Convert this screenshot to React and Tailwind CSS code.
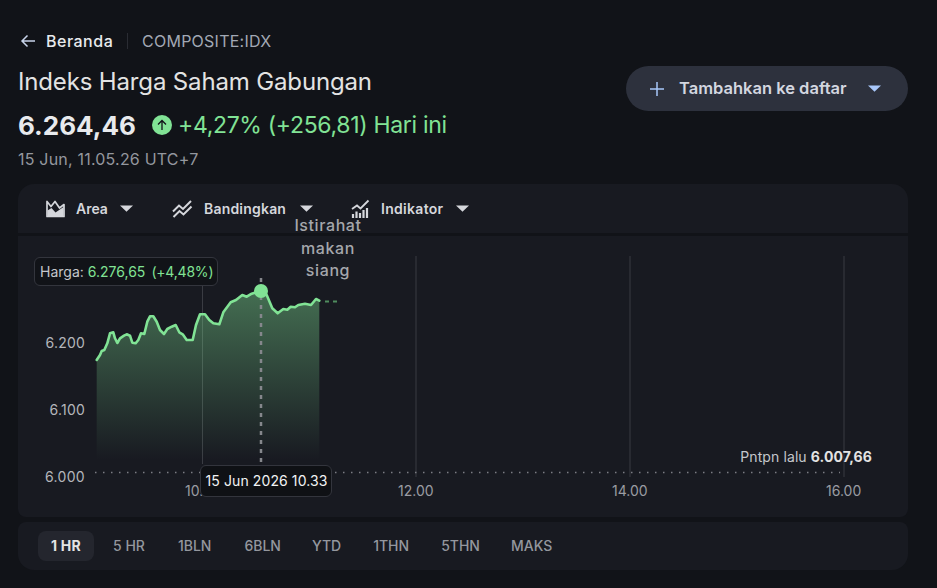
const pts = [[96.7,360],[100,355],[101.7,351],[104.3,350],[107.3,343.3],[110,333.3],[113.3,332.3],[115,338.3],[117.3,343],[120,338.3],[124,335.7],[126.7,334.3],[130,335.7],[132.3,342.7],[135.7,343.3],[138.3,340],[141,333.3],[144.3,334],[147.3,321.7],[150,316.3],[153.3,316.3],[156.7,321.7],[160,330],[164,334],[167.3,329],[171.7,326.7],[175.7,325],[179.3,332.3],[182.7,334.3],[186.7,340],[192.7,340],[196,325],[200,314.3],[205,314.3],[209.3,320],[213.3,323.3],[219.3,324.3],[223.3,312.3],[230.7,302.3],[236,300],[242.3,295],[246.7,296.7],[251.7,293.7],[260,291],[266.7,295],[272.3,308.3],[277.7,313.3],[283.3,309],[287.3,309.7],[290.7,306.7],[295,307.3],[298.3,305],[305,303.7],[311,305],[316,299],[319.3,300.7]];
const OX = 18, OY = 236;
const line = pts.map(([x, y]) => `${(x - OX).toFixed(1)},${(y - OY).toFixed(1)}`).join(" ");
const area = `${line} ${319.3 - OX},${460 - OY} ${96.7 - OX},${460 - OY}`;

function Caret({ className }) {
  return (
    <svg width="13" height="7" viewBox="0 0 13 7" className={className}>
      <path d="M0 0.500h13L6.500 6.800z" fill="currentColor" />
    </svg>
  );
}
function AreaIcon() {
  return (
    <svg width="20" height="20" viewBox="0 0 20 20" fill="none">
      <path d="M2 2.500v15h17V5.500l-4.500 3.500L10 2.500 6 7.500z" stroke="#d5d7dc" strokeWidth="1.700" strokeLinejoin="round" />
      <path d="M2.500 17v-5.500l4-2.500 4 4.500 8-5.500v9z" fill="#d5d7dc" />
    </svg>
  );
}
function CompareIcon() {
  return (
    <svg width="21" height="20" viewBox="0 0 21 20" fill="none" stroke="#d5d7dc" strokeWidth="2">
      <path d="M1 12.500l6-6 4 3.500 8-8" />
      <path d="M1.500 18l6-6 4 3.500 8-8" />
    </svg>
  );
}
function IndicatorIcon() {
  return (
    <svg width="19" height="20" viewBox="0 0 19 20" fill="none">
      <path d="M1 10l5-3.500 3.500 3L17.500 1.500" stroke="#d5d7dc" strokeWidth="1.800" />
      <path d="M2 19v-4M5.500 19v-6.500M9 19v-5M12.500 19v-8M16 19V9" stroke="#d5d7dc" strokeWidth="2.200" />
    </svg>
  );
}
const toolBtn = "flex items-center text-sm font-semibold text-[#d5d7dc]";
const ranges = [["5 HR", "ml-[19px]"], ["1BLN", "ml-[33px]"], ["6BLN", "ml-[33px]"], ["YTD", "ml-[31px]"], ["1THN", "ml-[32px]"], ["5THN", "ml-[32px]"], ["MAKS", "ml-[31px]"]];

export default function App() {
  return (
    <div className="w-[937px] h-[588px] overflow-hidden bg-[#111318] pl-[18px] pr-[29px] pt-[31px] font-['Inter',sans-serif] text-[#e3e3e3]">
      <div className="flex items-center h-5">
        <svg width="16" height="16" viewBox="0 0 16 16" fill="none" stroke="#c8d4ea" strokeWidth="1.500" className="ml-[2px]">
          <path d="M15 8H2M7.500 2.500L2 8l5.500 5.500" />
        </svg>
        <span className="ml-[10px] text-base font-medium tracking-[0.5px] text-[#e8eaed] w-[68px] whitespace-nowrap">Beranda</span>
        <span className="ml-[13px] w-px h-4 bg-[#2a2c33]" />
        <span className="ml-[14px] text-base tracking-[0.25px] text-[#a2a8b4]">COMPOSITE:IDX</span>
      </div>
      <div className="flex justify-between">
        <div>
          <div className="mt-[15px] text-2xl leading-8 tracking-[-0.15px] text-[#e3e3e3]">Indeks Harga Saham Gabungan</div>
          <div className="flex items-center mt-[9px] h-9">
            <span className="text-[26px] font-bold text-[#e8eaed] w-[134px]">6.264,46</span>
            <span className="flex items-center justify-center w-[20px] h-[20px] rounded-full bg-[#81e395]">
              <svg width="12" height="12" viewBox="0 0 12 12" fill="none" stroke="#111318" strokeWidth="1.300"><path d="M6 11V1.500M2 5.500l4-4 4 4" /></svg>
            </span>
            <span className="ml-[6px] text-[23px] tracking-[-0.32px] text-[#81e395]">+4,27% (+256,81) Hari ini</span>
          </div>
          <div className="mt-[4px] text-base leading-6 tracking-[0.2px] text-[#94979e]">15 Jun, 11.05.26 UTC+7</div>
        </div>
        <button className="mt-[15px] flex items-center h-[45px] w-[282px] rounded-full bg-[#2d313d] pl-[24px]">
          <svg width="14" height="14" viewBox="0 0 14 14" stroke="#a8c7fa" strokeWidth="1.500"><path d="M7 0v14M0 7h14" /></svg>
          <span className="ml-[15px] text-[16.5px] font-semibold text-[#d3d7e0] w-[172px] text-left whitespace-nowrap">Tambahkan ke daftar</span>
          <Caret className="ml-[17px] text-[#a8c7fa]" />
        </button>
      </div>

      <div className="mt-[13px] h-[49px] rounded-t-2xl bg-[#181a21] flex items-center pl-[27px]">
        <div className={toolBtn}>
          <AreaIcon />
          <span className="ml-[11px] w-[32px]">Area</span>
          <Caret className="ml-[12px]" />
        </div>
        <div className={`${toolBtn} ml-[39px]`}>
          <CompareIcon />
          <span className="ml-[11px] w-[82px] tracking-[0.2px] whitespace-nowrap">Bandingkan</span>
          <Caret className="ml-[14px]" />
        </div>
        <div className={`${toolBtn} ml-[38px]`}>
          <IndicatorIcon />
          <span className="ml-[11px] w-[63px] tracking-[0.3px]">Indikator</span>
          <Caret className="ml-[12px]" />
        </div>
      </div>

      <div className="relative mt-[3px] h-[281px] rounded-b-lg bg-[#181a21]">
        <svg width="890" height="281" viewBox="0 0 890 281" fill="none" className="block">
          <defs>
            <linearGradient id="fillG" x1="0" y1="55" x2="0" y2="224" gradientUnits="userSpaceOnUse">
              <stop offset="0" stopColor="#81e395" stopOpacity="0.42" />
              <stop offset="1" stopColor="#81e395" stopOpacity="0" />
            </linearGradient>
          </defs>
          <path d="M184.500 49V228" stroke="#3a3c43" />
          <path d="M398 20V241M612 20V241M826 20V241" stroke="#2e3037" strokeWidth="1.500" />
          <path d="M77 236.500H822" stroke="#7b7d84" strokeWidth="1.300" strokeDasharray="1.500 6.500" />
          <polygon points={area} fill="url(#fillG)" />
          <polyline points={line} stroke="#81e395" strokeWidth="2.600" strokeLinejoin="round" strokeLinecap="round" />
          <path d="M307 65.500H320" stroke="#4f8c5e" strokeWidth="2" strokeDasharray="4 4" />
          <path d="M243 42V228" stroke="#85878c" strokeWidth="2.500" strokeDasharray="4 5" />
          <circle cx="243" cy="55" r="7" fill="#81e395" />
        </svg>

        <span className="absolute right-[823px] top-[98px] text-sm leading-[18px] tracking-[0.2px] text-[#b4b6bb]">6.200</span>
        <span className="absolute right-[823px] top-[165px] text-sm leading-[18px] tracking-[0.2px] text-[#b4b6bb]">6.100</span>
        <span className="absolute right-[823px] top-[232px] text-sm leading-[18px] tracking-[0.3px] text-[#b4b6bb]">6.000</span>
        <span className="absolute left-[167px] top-[246px] text-sm leading-[18px] text-[#9a9ca2]">10.00</span>
        <span className="absolute left-[380px] top-[246px] text-sm leading-[18px] text-[#9a9ca2]">12.00</span>
        <span className="absolute left-[594px] top-[246px] text-sm leading-[18px] text-[#9a9ca2]">14.00</span>
        <span className="absolute left-[808px] top-[246px] text-sm leading-[18px] text-[#9a9ca2]">16.00</span>

        <div className="absolute left-[16px] top-[21px] flex items-center h-[29px] w-[184px] rounded-md border border-[#33353d] bg-[#111318] pl-[5px] text-sm whitespace-nowrap">
          <span className="text-[#c4c7cc]">Harga:</span>
          <span className="ml-[4px] text-[#81e395]">6.276,65</span>
          <span className="ml-[6px] tracking-[-0.2px] text-[#81e395]">(+4,48%)</span>
        </div>
        <div className="absolute left-[182px] top-[229px] flex items-center justify-center h-[32px] w-[132px] rounded-md border border-[#33353d] bg-[#0f1115] pl-[1px] text-sm tracking-[0.1px] text-[#f1f3f4] whitespace-nowrap">15 Jun 2026 10.33</div>
        <div className="absolute left-[270px] top-[-22px] w-[80px] text-center text-base leading-[22.5px] tracking-[0.6px] font-medium text-[#a5a7ac]">Istirahat makan siang</div>
        <div className="absolute right-[36px] top-[212px] text-sm leading-[18px] tracking-[0.1px] text-[#c4c7cc]">
          Pntpn lalu <span className="font-bold text-[#e3e3e3]">6.007,66</span>
        </div>
      </div>

      <div className="mt-[5px] h-[48px] rounded-t-lg rounded-b-2xl bg-[#181a21] flex items-center pl-[20px] text-sm text-[#94979e] font-medium">
        <span className="flex items-center justify-center w-[56px] h-[30px] rounded-lg bg-[#24262e] font-bold tracking-[0.3px] text-[#e3e3e3]">1 HR</span>
        {ranges.map(([label, margin]) => (
          <span key={label} className={margin}>{label}</span>
        ))}
      </div>
    </div>
  );
}
